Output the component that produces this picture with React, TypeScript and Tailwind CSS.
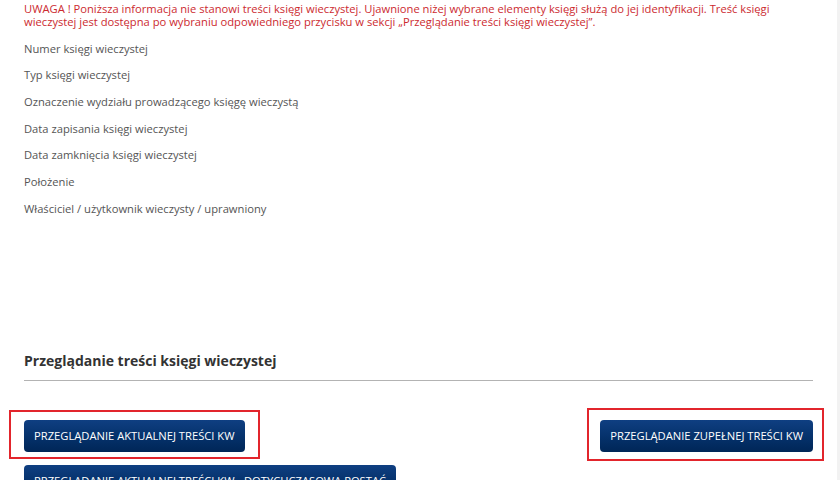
import type { ReactNode } from 'react';

const fields = [
  'Numer księgi wieczystej',
  'Typ księgi wieczystej',
  'Oznaczenie wydziału prowadzącego księgę wieczystą',
  'Data zapisania księgi wieczystej',
  'Data zamknięcia księgi wieczystej',
  'Położenie',
  'Właściciel / użytkownik wieczysty / uprawniony',
];

export default function App() {
  return (
    <div className="flex h-[480px] w-[840px] overflow-hidden bg-white font-['Open_Sans',sans-serif]">
      <div className="flex-1 pl-[24px] pr-[24px] pt-[1.5px]">
        <p className="text-[11.2px] leading-[13px] text-[#cc2a2f]">
          UWAGA ! Poniższa informacja nie stanowi treści księgi wieczystej. Ujawnione niżej wybrane elementy księgi służą do jej identyfikacji. Treść księgi wieczystej jest dostępna po wybraniu odpowiedniego przycisku w sekcji „Przeglądanie treści księgi wieczystej”.
        </p>

        <ul className="mt-[8px]">
          {fields.map((field) => (
            <li key={field} className="text-[11.2px] leading-[26.67px] text-[#555555]">{field}</li>
          ))}
        </ul>

        <section className="mt-[129px]">
          <h2 className="border-b border-[#b3b3b3] pb-[9px] text-[14px] font-bold leading-[20px] text-[#333333]">
            Przeglądanie treści księgi wieczystej
          </h2>

          <div className="mt-[39px] flex items-start justify-between">
            <Marked className="-inset-x-[15px] -bottom-[7px] -top-[10px]">
              <KwButton>PRZEGLĄDANIE AKTUALNEJ TREŚCI KW</KwButton>
            </Marked>
            <Marked className="-bottom-[9px] -left-[13px] -right-[11px] -top-[12px]">
              <KwButton>PRZEGLĄDANIE ZUPEŁNEJ TREŚCI KW</KwButton>
            </Marked>
          </div>

          <div className="mt-[13px]">
            <KwButton>PRZEGLĄDANIE AKTUALNEJ TREŚCI KW - DOTYCHCZASOWA POSTAĆ</KwButton>
          </div>
        </section>
      </div>
      <div className="w-[3px] bg-[#f2f2f2]" />
    </div>
  );
}

function KwButton({ children }: { children: ReactNode }) {
  return (
    <button className="h-[32px] rounded-[4px] bg-gradient-to-b from-[#0f3f82] to-[#002657] px-[10px] text-[11.2px] leading-[32px] text-white">
      {children}
    </button>
  );
}

// red annotation frame drawn around a button
function Marked({ className, children }: { className: string; children: ReactNode }) {
  return (
    <div className="relative">
      {children}
      <div className={`pointer-events-none absolute border-2 border-[#e2252c] ${className}`} />
    </div>
  );
}
